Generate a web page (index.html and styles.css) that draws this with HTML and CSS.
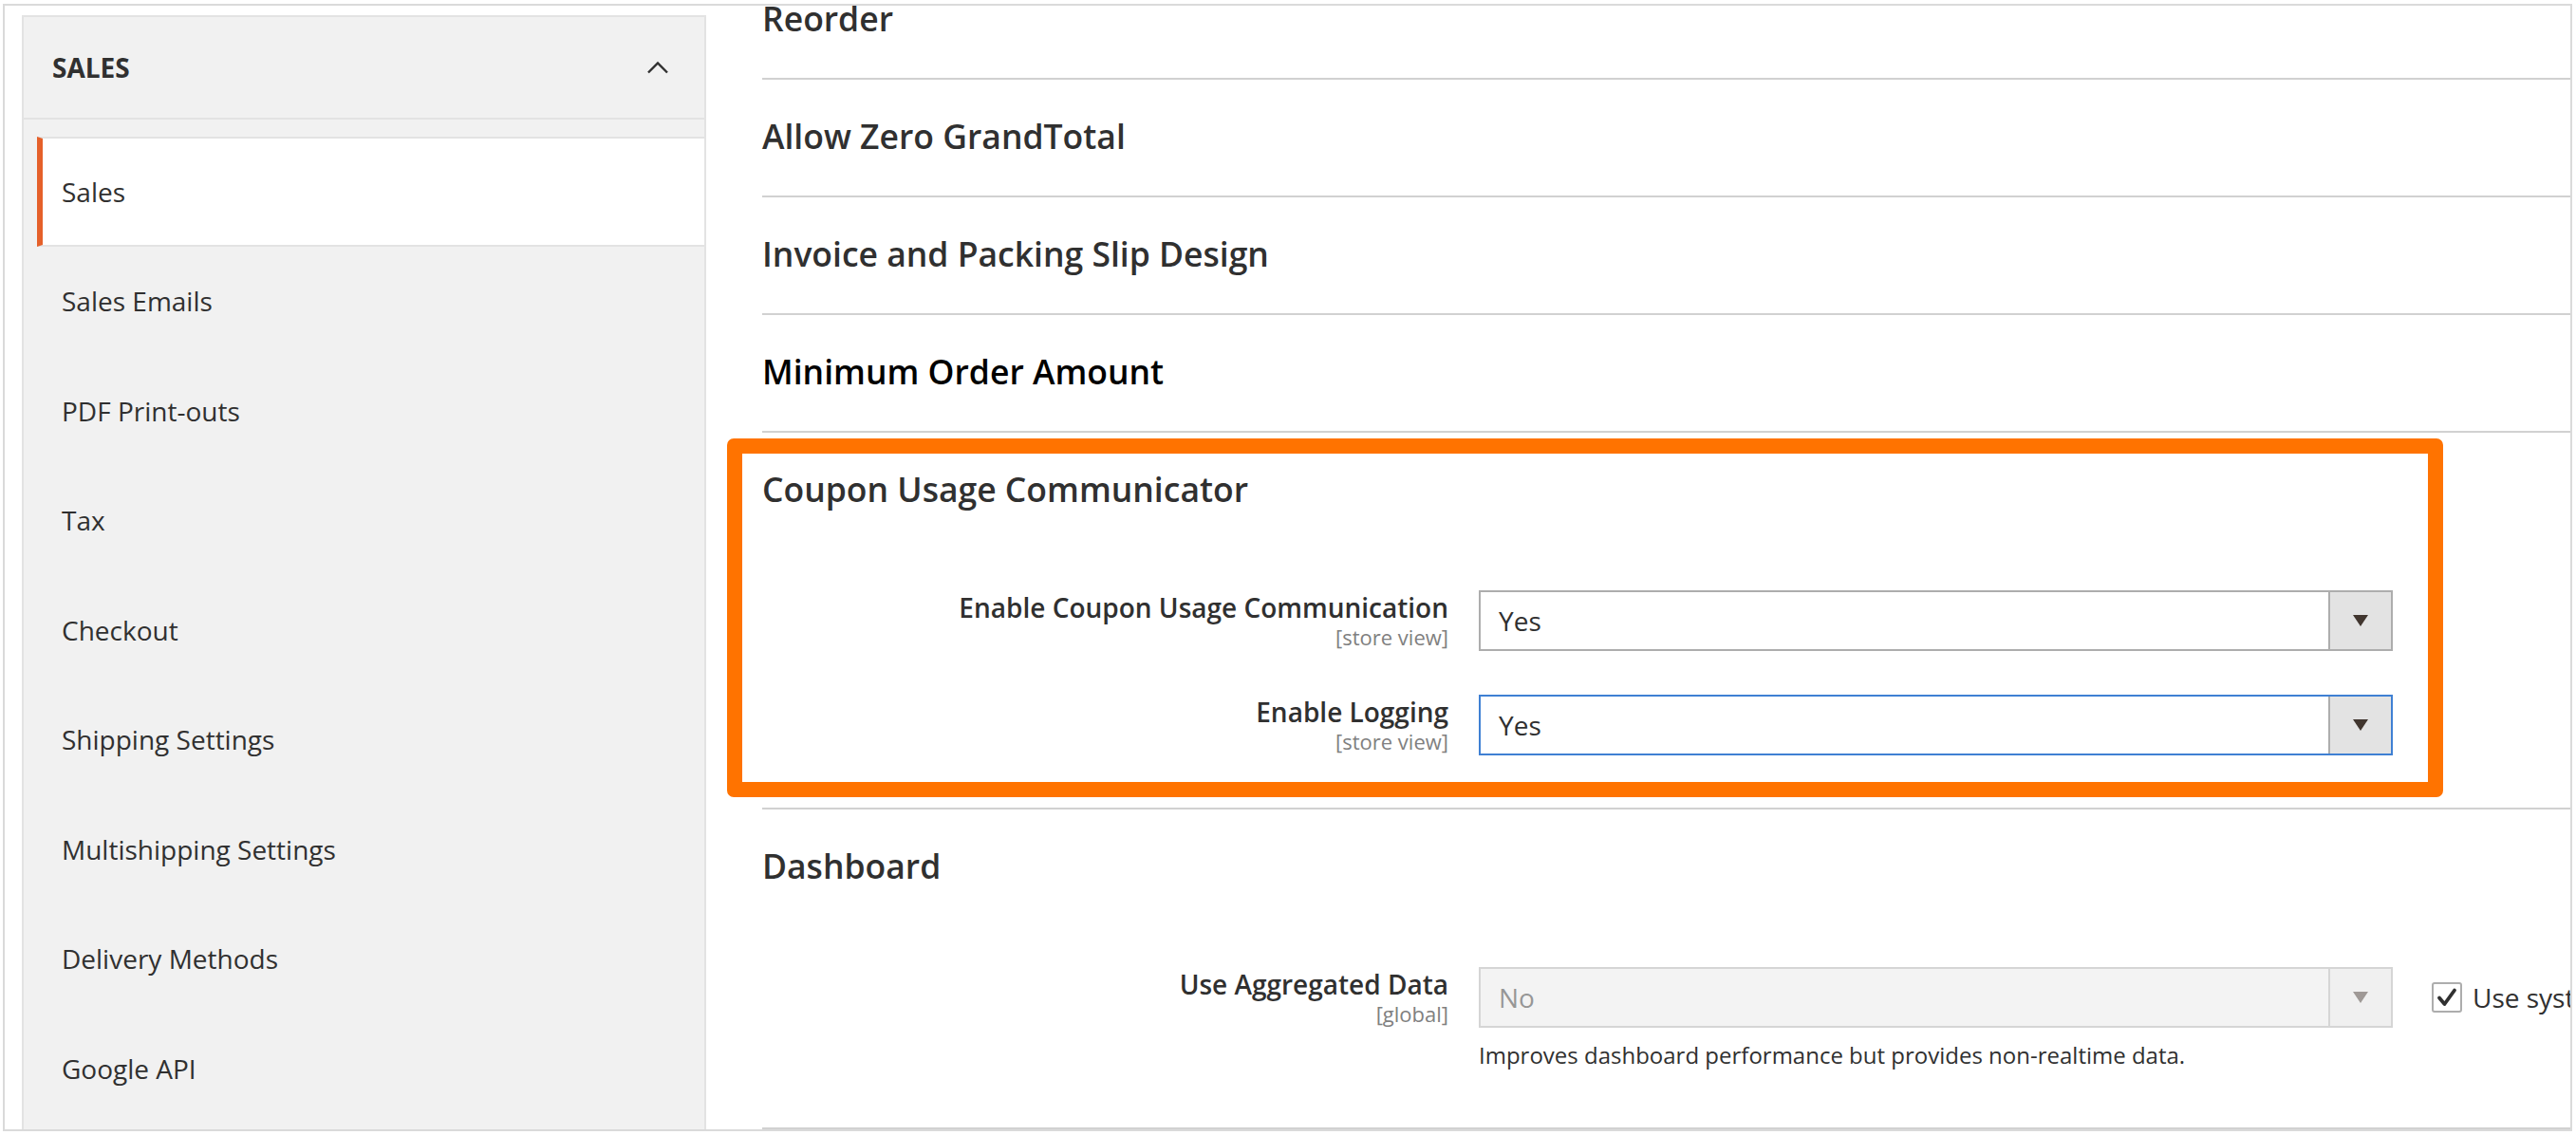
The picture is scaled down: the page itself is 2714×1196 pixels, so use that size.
FILE: index.html
```html
<!DOCTYPE html>
<html lang="en">
<head>
<meta charset="utf-8">
<title>Configuration - Sales</title>
<link rel="stylesheet" href="styles.css">
</head>
<body>
<div class="frame">
  <aside class="sidebar">
    <div class="nav-head">
      <span>SALES</span>
      <svg class="chevron" width="24" height="14" viewBox="0 0 24 14"><polyline points="2,12.5 12,2.5 22,12.5" fill="none" stroke="#303030" stroke-width="2.4"/></svg>
    </div>
    <ul class="nav-items">
      <li class="nav-item active">Sales</li>
      <li class="nav-item">Sales Emails</li>
      <li class="nav-item">PDF Print-outs</li>
      <li class="nav-item">Tax</li>
      <li class="nav-item">Checkout</li>
      <li class="nav-item">Shipping Settings</li>
      <li class="nav-item">Multishipping Settings</li>
      <li class="nav-item">Delivery Methods</li>
      <li class="nav-item">Google API</li>
    </ul>
  </aside>

  <main class="content">
    <section class="group collapsed first"><h2 class="group-title">Reorder</h2></section>
    <section class="group collapsed"><h2 class="group-title">Allow Zero GrandTotal</h2></section>
    <section class="group collapsed"><h2 class="group-title">Invoice and Packing Slip Design</h2></section>
    <section class="group collapsed"><h2 class="group-title dark">Minimum Order Amount</h2></section>

    <section class="group open coupon">
      <h2 class="group-title">Coupon Usage Communicator</h2>
      <div class="fields">
        <div class="field-row">
          <div class="field-label">Enable Coupon Usage Communication<span class="scope">[store view]</span></div>
          <div class="select"><span class="select-value">Yes</span><span class="select-btn"></span></div>
          <div class="field-extra"></div>
        </div>
        <div class="field-row">
          <div class="field-label">Enable Logging<span class="scope">[store view]</span></div>
          <div class="select focused"><span class="select-value">Yes</span><span class="select-btn"></span></div>
          <div class="field-extra"></div>
        </div>
      </div>
      <div class="highlight"></div>
    </section>

    <section class="group open dashboard">
      <h2 class="group-title">Dashboard</h2>
      <div class="fields">
        <div class="field-row">
          <div class="field-label">Use Aggregated Data<span class="scope">[global]</span></div>
          <div class="select disabled"><span class="select-value">No</span><span class="select-btn"></span></div>
          <div class="field-extra">
            <span class="checkbox"><svg width="24" height="24" viewBox="0 0 24 24"><path d="M4 12.5 L9.5 19 L20 4.5" fill="none" stroke="#303030" stroke-width="3.8" stroke-linecap="round" stroke-linejoin="round"/></svg></span>
            <span class="use-default">Use system value</span>
          </div>
          <div class="note">Improves dashboard performance but provides non-realtime data.</div>
        </div>
      </div>
    </section>
  </main>
</div>
</body>
</html>
```
FILE: styles.css
```css
* { box-sizing: border-box; }
html, body { margin: 0; padding: 0; background: #fff; }
body {
  font-family: "Open Sans", "Liberation Sans", sans-serif;
  color: #303030;
}

.frame {
  margin: 4px 0 0 3px;
  width: 2707px;
  height: 1188px;
  border: 2px solid #dadada;
  display: flex;
  overflow: hidden;
}

/* Sidebar */
.sidebar {
  flex: none;
  width: 721px;
  margin: 10px 0 0 18px;
  background: #f1f1f1;
  border: 2px solid #e3e3e3;
  border-bottom: none;
}
.nav-head {
  height: 108px;
  border-bottom: 2px solid #e3e3e3;
  display: flex;
  align-items: center;
  justify-content: space-between;
  padding: 0 37px 0 30px;
  font-size: 28px;
  font-weight: 700;
  color: #303030;
}
.chevron { display: block; }
.nav-items {
  list-style: none;
  margin: 0;
  padding: 18px 0 0 14px;
}
.nav-item {
  height: 115.5px;
  display: flex;
  align-items: center;
  padding-left: 20px;
  border-left: 6px solid transparent;
  border-top: 2px solid transparent;
  border-bottom: 2px solid transparent;
  font-size: 28px;
  color: #303030;
}
.nav-item.active {
  background: #fff;
  border-left-color: #e5602a;
  border-top-color: #e3e3e3;
  border-bottom-color: #e3e3e3;
}

/* Content */
.content {
  flex: 1;
  min-width: 0;
  margin-left: 59px;
}
.group {
  position: relative;
  border-bottom: 2px solid #d1d1d1;
  padding-top: 36px;
}
.group.collapsed { height: 124px; }
.group.first { margin-top: -46px; }
.group-title {
  margin: 0;
  font-size: 35.5px;
  font-weight: 600;
  line-height: 46px;
  color: #303030;
}
.group-title.dark { color: #000; }

.fields {
  padding-top: 84px;
  display: flex;
  flex-direction: column;
  row-gap: 46px;
}
.coupon { padding-bottom: 55px; }
.dashboard { padding-bottom: 59px; }

.field-row {
  display: grid;
  grid-template-columns: 723px 963px 1fr;
  column-gap: 32px;
}
.field-label {
  text-align: right;
  font-size: 28px;
  font-weight: 600;
  line-height: 36px;
}
.scope {
  display: block;
  font-size: 22px;
  font-weight: 400;
  line-height: 26px;
  color: #808080;
}

.select {
  height: 64px;
  border: 2px solid #adadad;
  background: #fff;
  display: flex;
}
.select-value {
  flex: 1;
  padding-left: 19px;
  font-size: 28px;
  line-height: 60px;
  color: #303030;
}
.select-btn {
  width: 66px;
  border-left: 2px solid #adadad;
  background: #e3e3e3;
  display: flex;
  align-items: center;
  justify-content: center;
}
.select-btn::after {
  content: "";
  border-left: 8px solid transparent;
  border-right: 8px solid transparent;
  border-top: 12px solid #41362f;
}
.select.focused { border-color: #3f80d3; }
.select.disabled {
  background: #e9e9e9;
  opacity: 0.5;
}

.field-extra {
  display: flex;
  align-items: center;
  height: 64px;
  padding-left: 9px;
  white-space: nowrap;
}
.checkbox {
  flex: none;
  width: 32px;
  height: 32px;
  border: 2px solid #adadad;
  border-radius: 3px;
  background: #fff;
  display: flex;
  align-items: center;
  justify-content: center;
}
.use-default {
  margin-left: 11px;
  font-size: 28px;
  color: #303030;
}
.note {
  grid-column: 2;
  margin-top: 12px;
  font-size: 24px;
  line-height: 34px;
  color: #303030;
}

/* Annotation overlay */
.highlight {
  position: absolute;
  top: 6px;
  left: -37px;
  width: 1808px;
  height: 378px;
  border: 16px solid #ff7300;
  border-radius: 7px;
  pointer-events: none;
}
```
